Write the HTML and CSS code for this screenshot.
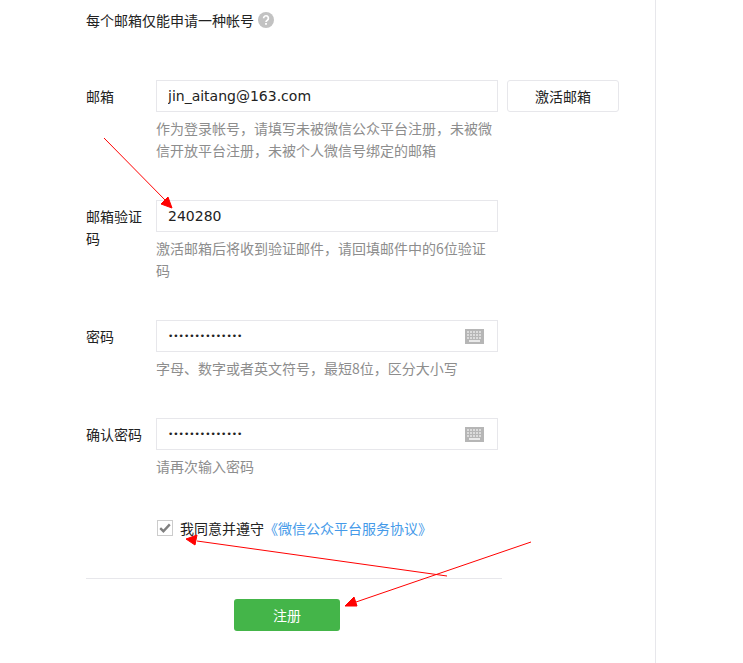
FILE: index.html
```html
<!DOCTYPE html>
<html lang="zh-CN">
<head>
    <meta charset="UTF-8">
    <meta name="viewport" content="width=device-width, initial-scale=1.0">
    <title>注册</title>
    <link rel="stylesheet" href="styles.css">
</head>
<body>
    <div class="page">
        <div class="notice">
            <span>每个邮箱仅能申请一种帐号</span>
            <svg class="help" width="16" height="16" viewBox="0 0 16 16">
                <circle cx="8" cy="8" r="8" fill="#c2c2c2"/>
                <path d="M5.6 6.2a2.4 2.4 0 1 1 3.7 2c-.9.6-1.3 1-1.3 1.9" fill="none" stroke="#fff" stroke-width="1.7"/>
                <rect x="7.1" y="11" width="1.8" height="1.8" fill="#fff"/>
            </svg>
        </div>

        <div class="row">
            <label class="label">邮箱</label>
            <div class="field">
                <input class="input" type="text" value="jin_aitang@163.com">
                <p class="hint">作为登录帐号，请填写未被微信公众平台注册，未被微信开放平台注册，未被个人微信号绑定的邮箱</p>
            </div>
            <button class="btn-activate" type="button">激活邮箱</button>
        </div>

        <div class="row">
            <label class="label">邮箱验证码</label>
            <div class="field">
                <input class="input" type="text" value="240280">
                <p class="hint">激活邮箱后将收到验证邮件，请回填邮件中的6位验证码</p>
            </div>
        </div>

        <div class="row">
            <label class="label">密码</label>
            <div class="field">
                <div class="input-wrap">
                    <input class="input password" type="text" value="••••••••••••••">
                    <svg class="keyboard" width="19" height="15" viewBox="0 0 19 15">
                        <rect width="19" height="15" fill="#b6b6b6"/>
                        <path d="M2 3h15M2 6h15" stroke="#fff" stroke-width="1.2" stroke-dasharray="2 1"/>
                        <path d="M2 9h15" stroke="#fff" stroke-width="1.2" stroke-dasharray="2 1"/>
                        <path d="M4 12h11" stroke="#fff" stroke-width="1.4"/>
                    </svg>
                </div>
                <p class="hint">字母、数字或者英文符号，最短8位，区分大小写</p>
            </div>
        </div>

        <div class="row">
            <label class="label">确认密码</label>
            <div class="field">
                <div class="input-wrap">
                    <input class="input password" type="text" value="••••••••••••••">
                    <svg class="keyboard" width="19" height="15" viewBox="0 0 19 15">
                        <rect width="19" height="15" fill="#b6b6b6"/>
                        <path d="M2 3h15M2 6h15" stroke="#fff" stroke-width="1.2" stroke-dasharray="2 1"/>
                        <path d="M2 9h15" stroke="#fff" stroke-width="1.2" stroke-dasharray="2 1"/>
                        <path d="M4 12h11" stroke="#fff" stroke-width="1.4"/>
                    </svg>
                </div>
                <p class="hint">请再次输入密码</p>
            </div>
        </div>

        <div class="agree">
            <span class="checkbox">
                <svg width="12" height="10" viewBox="0 0 12 10">
                    <path d="M1.2 5.2 4.4 8.2 10.8 1.4" fill="none" stroke="#808080" stroke-width="2.4"/>
                </svg>
            </span>
            <span>我同意并遵守<a class="link" href="#">《微信公众平台服务协议》</a></span>
        </div>

        <div class="actions">
            <button class="btn-submit" type="button">注册</button>
        </div>
    </div>

    <!-- red annotation arrows drawn over the form -->
    <svg class="arrows" width="743" height="663" viewBox="0 0 743 663">
        <g stroke="#f00" fill="#f00">
            <path d="M104 138 167 202" fill="none"/>
            <path d="M172 208 161 204 168 197z"/>
            <path d="M447 576 197 541" fill="none"/>
            <path d="M186 539 197 535 195 545z"/>
            <path d="M531 542 356 602" fill="none"/>
            <path d="M345 606 354 597 357 606z"/>
        </g>
    </svg>
</body>
</html>
```
FILE: styles.css
```css
html, body {
    margin: 0;
    padding: 0;
    background-color: #fff;
}
body {
    position: relative;
    height: 663px;
    overflow: hidden;
    font-family: "Noto Sans CJK SC", sans-serif;
    font-size: 14px;
    line-height: 22px;
    color: #222;
}
.page {
    box-sizing: border-box;
    width: 656px;
    height: 663px;
    padding: 9px 0 0 86px;
    border-right: 1px solid #e7e7eb;
}
.notice {
    display: flex;
    align-items: center;
    gap: 4px;
    margin-bottom: 49px;
}
.row {
    display: flex;
    align-items: flex-start;
    margin-bottom: 39px;
}
.label {
    box-sizing: border-box;
    flex: none;
    width: 70px;
    padding: 5px 14px 0 0;
}
.field {
    flex: none;
    width: 342px;
}
.input {
    box-sizing: border-box;
    display: block;
    width: 342px;
    height: 32px;
    padding: 0 11px;
    border: 1px solid #e7e7eb;
    outline: none;
    background-color: #fff;
    font-family: "DejaVu Sans", sans-serif;
    font-size: 14px;
    color: #222;
}
.input-wrap {
    position: relative;
}
.password {
    font-size: 9px;
    letter-spacing: 0;
}
.keyboard {
    position: absolute;
    top: 9px;
    right: 14px;
}
.hint {
    margin: 5px 0 0 0;
    color: #8d8d8d;
}
.btn-activate {
    box-sizing: border-box;
    flex: none;
    width: 112px;
    height: 32px;
    margin-left: 9px;
    border: 1px solid #e7e7eb;
    border-radius: 3px;
    background-color: #fff;
    font-family: inherit;
    font-size: 14px;
    color: #222;
}
.agree {
    display: flex;
    align-items: center;
    gap: 7px;
    width: 416px;
    box-sizing: border-box;
    padding: 1px 0 39px 71px;
    border-bottom: 1px solid #e7e7eb;
}
.checkbox {
    box-sizing: border-box;
    display: flex;
    align-items: center;
    justify-content: center;
    width: 16px;
    height: 16px;
    border: 1px solid #ccc;
}
.link {
    color: #459ae9;
    text-decoration: none;
}
.actions {
    width: 402px;
    padding-top: 20px;
    text-align: center;
}
.btn-submit {
    width: 106px;
    height: 32px;
    border: 0;
    border-radius: 3px;
    background-color: #44b549;
    font-family: inherit;
    font-size: 14px;
    color: #fff;
}
.arrows {
    position: absolute;
    top: 0;
    left: 0;
    pointer-events: none;
}
```
